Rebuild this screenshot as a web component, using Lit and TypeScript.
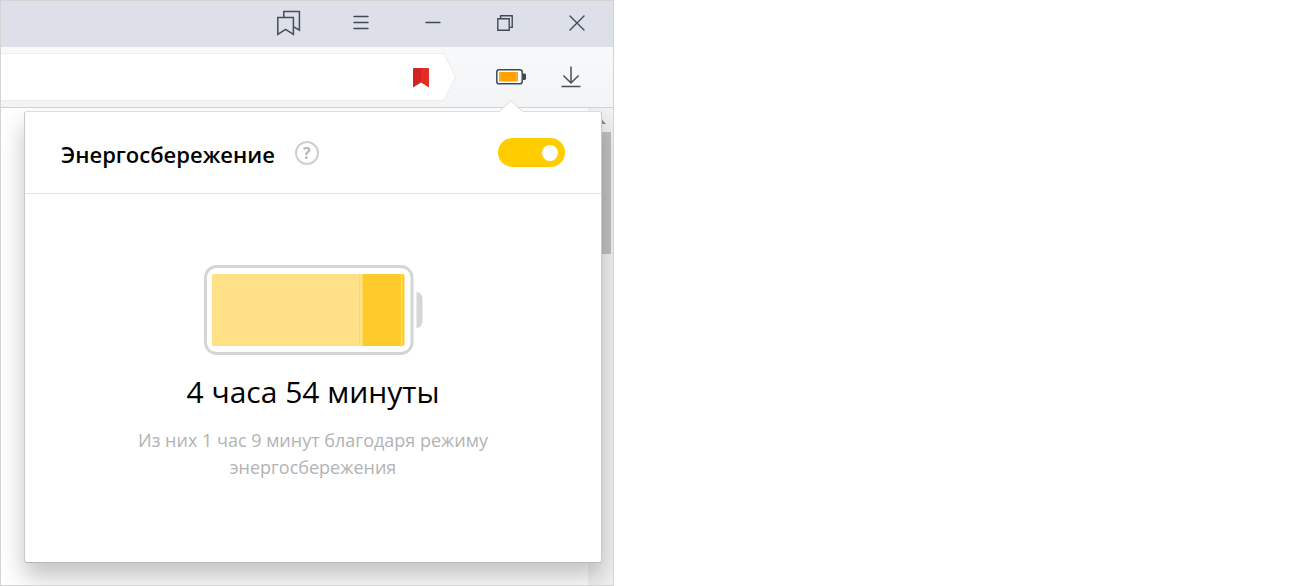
import { LitElement, html, css, svg } from "lit";
import { customElement, state } from "lit/decorators.js";

const icons = {
  collections: svg`<svg width="24" height="26" viewBox="0 0 24 26" fill="none" stroke="#434e57" stroke-width="1.5"><path d="M.8 7.600h15.600v16.800l-7.800-5-7.800 5z"/><path d="M6.800 7.400V1.600h15.600v18.600l-5.600-3.400"/></svg>`,
  menu: svg`<svg width="16" height="16" viewBox="0 0 16 16" stroke="#3f4a54" stroke-width="1.400" stroke-linecap="round"><path d="M1 1.500h14M1 7.500h14M1 13.500h14"/></svg>`,
  minimize: svg`<svg width="16" height="16" viewBox="0 0 16 16" stroke="#3f4a54" stroke-width="1.400" stroke-linecap="round"><path d="M1 7.500h14"/></svg>`,
  restore: svg`<svg width="16" height="16" viewBox="0 0 16 16" fill="none" stroke="#3f4a54" stroke-width="1.400"><path d="M.8 3.800h11.400v11.400H.8z"/><path d="M3.600 3.600V.8h11.600v11.600h-2.800"/></svg>`,
  close: svg`<svg width="16" height="16" viewBox="0 0 16 16" stroke="#3f4a54" stroke-width="1.400" stroke-linecap="round"><path d="M1 1l14 14M15 1L1 15"/></svg>`,
  bookmark: svg`<svg width="16" height="20" viewBox="0 0 16 20"><path d="M0 1q0-1 1-1h7v14.600L0 19.600z" fill="#d22420"/><path d="M8 0h7q1 0 1 1v18.600l-8-5z" fill="#e22d24"/></svg>`,
  battery: svg`<svg width="30" height="16" viewBox="0 0 30 16"><rect x=".8" y=".8" width="25.400" height="14" rx="2.400" fill="#fff" stroke="#3f4850" stroke-width="1.500"/><path d="M27 4.600h1.600q1.400 0 1.400 1.400v3.600q0 1.400-1.400 1.400H27z" fill="#3f4850"/><rect x="3" y="3" width="19" height="9.600" rx="1" fill="#ffa200"/><path d="M4.500 3v9.600M20.500 3v9.600" stroke="#ffc45c" stroke-width=".5"/></svg>`,
  download: svg`<svg width="20" height="22" viewBox="0 0 20 22" fill="none" stroke="#47505a" stroke-width="1.500"><path d="M10 .5v16.500M2.400 9.500L10 17l7.600-7.500M.5 20.600h19"/></svg>`,
};

@customElement("power-battery")
class PowerBattery extends LitElement {
  static styles = css`
    :host { display: block; }
    .drawing { display: block; }
  `;
  render() {
    return html`<svg class="drawing" width="219" height="90" viewBox="0 0 219 90" role="img" aria-label="Батарея">
      <rect x="1.500" y="1.500" width="206.500" height="87" rx="11" fill="#fff" stroke="#d5d5d5" stroke-width="3"/>
      <path d="M212.500 27c3.500 0 6 3 6 7v22c0 4-2.500 7-6 7z" fill="#d5d5d5"/>
      <rect x="8" y="9" width="192.500" height="72" rx="2" fill="#ffca2c"/>
      <path d="M10 9h149v72H10q-2 0-2-2V11q0-2 2-2z" fill="#ffe187"/>
      <path d="M155.500 9v72" stroke="#ffd863" stroke-width="1"/>
      <path d="M158.500 9v72" stroke="#ffd55a" stroke-width="1"/>
      <path d="M197.500 9v72" stroke="#ffe187" stroke-width="1"/>
    </svg>`;
  }
}

@customElement("power-popup")
class PowerPopup extends LitElement {
  @state() private enabled = true;
  static styles = css`
    :host {
      display: block;
      box-sizing: border-box;
      background: #fff;
      border: 1px solid #c8c8c8;
      border-top-color: #dedede;
      border-bottom-color: #b8b8b8;
      border-radius: 3px;
      box-shadow: 0 14px 24px rgba(0, 0, 0, 0.24);
      color: #000;
    }
    .header {
      display: flex;
      align-items: center;
      height: 81px;
      padding: 0 36px;
      border-bottom: 1px solid #e2e2e2;
    }
    .title { margin: 0; padding-top: 2px; font-size: 22px; line-height: 32px; font-weight: 600; }
    .help {
      width: 24px;
      height: 24px;
      margin-left: 20px;
      padding: 0;
      border: 2px solid #cfcfcf;
      border-radius: 50%;
      background: none;
      color: #b8b8b8;
      font: 700 16px/20px "Open Sans", "Noto Sans", sans-serif;
    }
    .switch {
      appearance: none;
      display: flex;
      align-items: center;
      width: 67px;
      height: 29px;
      margin: 0 0 0 auto;
      padding: 0 7px;
      border-radius: 15px;
      background: #d5d5d5;
    }
    .switch::before { content: ""; width: 16px; height: 16px; border-radius: 50%; background: #fff; }
    .switch:checked { background: #fc0; justify-content: flex-end; }
    .body { display: flex; flex-direction: column; align-items: center; padding: 71px 90px 81px; text-align: center; }
    .time { margin: 15px 0 0; font-size: 30px; line-height: 44px; font-weight: 400; }
    .saved { margin: 13px 0 0; max-width: 380px; font-size: 18px; line-height: 27px; color: #b3b3b3; }
  `;
  private toggle(e: Event) {
    this.enabled = (e.target as HTMLInputElement).checked;
  }
  render() {
    return html`
      <div class="header">
        <h2 class="title" id="title">Энергосбережение</h2>
        <button class="help" aria-label="Справка">?</button>
        <input class="switch" type="checkbox" role="switch" aria-labelledby="title" .checked=${this.enabled} @change=${this.toggle} />
      </div>
      <div class="body">
        <power-battery></power-battery>
        <p class="time">4 часа 54 минуты</p>
        <p class="saved">Из них 1 час 9 минут благодаря режиму энергосбережения</p>
      </div>`;
  }
}

@customElement("app-root")
class AppRoot extends LitElement {
  static styles = css`
    :host { display: block; min-height: 100vh; background: #fff; font-family: "Open Sans", "Noto Sans", sans-serif; }
    .window {
      display: flex;
      flex-direction: column;
      box-sizing: border-box;
      max-width: 614px;
      min-height: 100vh;
      border: 1px solid #d4d4d4;
    }
    .button { display: flex; align-items: center; justify-content: center; padding: 0; border: 0; background: none; }
    .titlebar { display: flex; justify-content: flex-end; height: 46px; background: #dde0e9; }
    .titlebar .button { width: 72px; padding-bottom: 2px; }
    .toolbar {
      position: relative;
      z-index: 1;
      display: flex;
      align-items: center;
      height: 60px;
      padding-right: 12px;
      background: linear-gradient(#f8f9fb, #f2f4f5);
      border-bottom: 1px solid #d2d2d2;
    }
    .address { display: flex; flex: 1; height: 48px; margin-right: 25px; }
    .field { display: flex; flex: 1; align-items: center; box-sizing: border-box; border: solid #eceef0; border-width: 1px 0; background: #fff; }
    .input { flex: 1; min-width: 0; padding: 0 16px; border: 0; outline: 0; background: none; font: inherit; font-size: 18px; }
    .mark { width: 16px; margin-right: 13px; padding-top: 1px; }
    .end { display: block; flex: none; }
    .tool { position: relative; display: flex; width: 60px; }
    .tool .button { flex: 1; height: 48px; }
    .tip { position: absolute; top: 47px; left: 18px; }
    .page { position: relative; flex: 1; padding: 3px 11px 22px 23px; overflow: hidden; background: #fff; }
    .scrollbar { position: absolute; top: 0; right: 0; bottom: 0; width: 25px; background: #f1f1f1; }
    .arrow { position: absolute; top: 10px; left: 7px; }
    .thumb { position: absolute; top: 24px; left: 2px; right: 2px; height: 122px; background: #c1c1c1; }
    .popup { position: relative; }
  `;
  render() {
    return html`<main class="window">
      <div class="titlebar">
        <button class="button" aria-label="Коллекции">${icons.collections}</button>
        <button class="button" aria-label="Меню">${icons.menu}</button>
        <button class="button" aria-label="Свернуть">${icons.minimize}</button>
        <button class="button" aria-label="Развернуть">${icons.restore}</button>
        <button class="button" aria-label="Закрыть">${icons.close}</button>
      </div>
      <div class="toolbar">
        <div class="address">
          <div class="field">
            <input class="input" type="text" aria-label="Адрес" />
            <button class="button mark" aria-label="Закладка">${icons.bookmark}</button>
          </div>
          <svg class="end" width="14" height="48" viewBox="0 0 14 48"><path d="M0 .5q2 0 3 2L13.500 24 3 45.500q-1 2-3 2" fill="#fff" stroke="#e9ebed"/></svg>
        </div>
        <div class="tool">
          <button class="button" aria-label="Энергосбережение">${icons.battery}</button>
          <svg class="tip" width="24" height="12" viewBox="0 0 24 12"><path d="M0 12L12 .5 24 12z" fill="#fff"/><path d="M.5 11.500L12 .5l11.500 11" fill="none" stroke="#d6d6d6"/></svg>
        </div>
        <div class="tool"><button class="button" aria-label="Загрузки">${icons.download}</button></div>
      </div>
      <div class="page">
        <div class="scrollbar">
          <svg class="arrow" width="11" height="6" viewBox="0 0 11 6"><path d="M0 6L5.500 0 11 6z" fill="#8a8a8a"/></svg>
          <div class="thumb"></div>
        </div>
        <power-popup class="popup"></power-popup>
      </div>
    </main>`;
  }
}
